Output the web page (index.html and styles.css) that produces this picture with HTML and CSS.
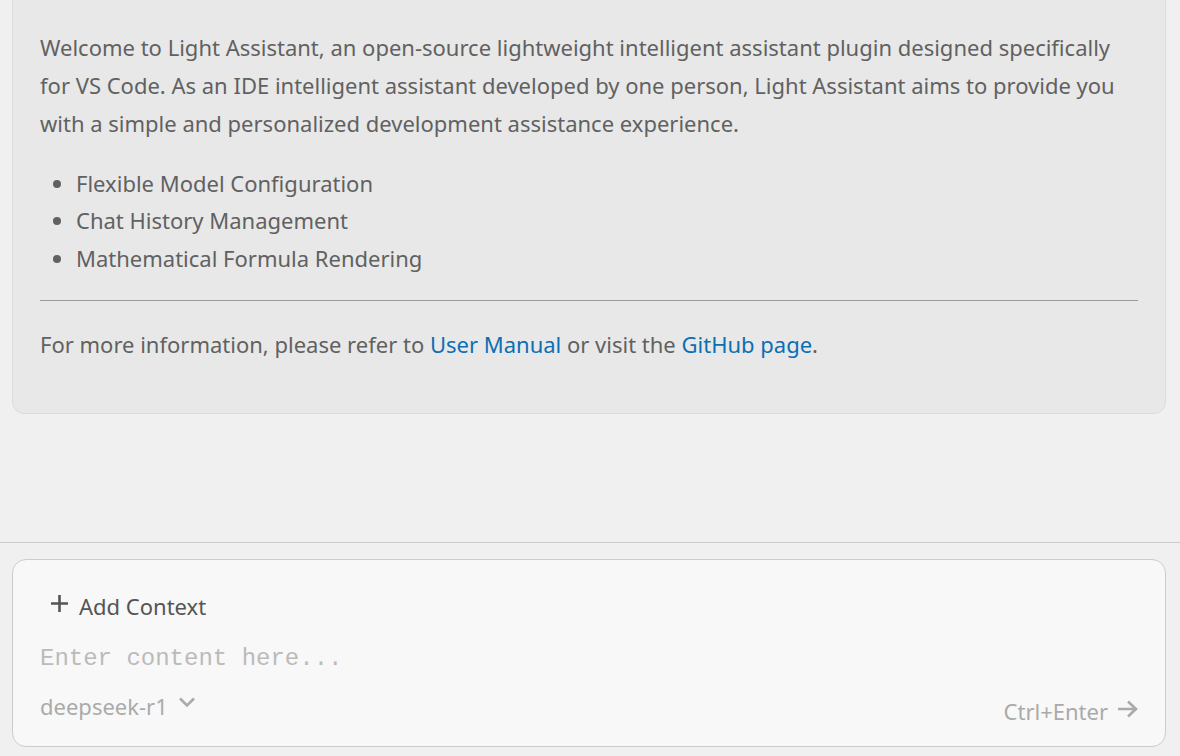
FILE: index.html
```html
<!DOCTYPE html>
<html lang="en">
<head>
<meta charset="utf-8">
<title>Light Assistant</title>
<link rel="stylesheet" href="styles.css">
</head>
<body>
<div class="app">
  <div class="messages">
    <div class="card">
      <p>Welcome to Light Assistant, an open-source lightweight intelligent assistant plugin designed specifically for VS Code. As an IDE intelligent assistant developed by one person, Light Assistant aims to provide you with a simple and personalized development assistance experience.</p>
      <ul>
        <li>Flexible Model Configuration</li>
        <li>Chat History Management</li>
        <li>Mathematical Formula Rendering</li>
      </ul>
      <hr>
      <p>For more information, please refer to <a href="#">User Manual</a> or visit the <a href="#">GitHub page</a>.</p>
    </div>
  </div>
  <div class="composer">
    <div class="inputbox">
      <div class="add-context">
        <svg class="plus" width="19" height="19" viewBox="0 0 19 19"><path d="M9.5 1v17M1 9.5h17" stroke="#555" stroke-width="2.6" fill="none"/></svg>
        <span>Add Context</span>
      </div>
      <div class="placeholder">Enter content here...</div>
      <div class="footer">
        <div class="model">deepseek-r1
          <svg width="18" height="12" viewBox="0 0 18 12"><path d="M2 2.5l7 7 7-7" stroke="#aaa" stroke-width="2.6" fill="none"/></svg>
        </div>
        <div class="send">Ctrl+Enter
          <svg width="21" height="18" viewBox="0 0 21 18"><path d="M1 9h18M11 1.5l8 7.5-8 7.5" stroke="#aaa" stroke-width="2.6" fill="none"/></svg>
        </div>
      </div>
    </div>
  </div>
</div>
</body>
</html>
```

FILE: styles.css
```css
* { box-sizing: border-box; }
html, body { margin: 0; height: 100%; }
body {
  background: #f0f0f0;
  font-family: "Noto Sans", "Open Sans", sans-serif;
  color: #616161;
  overflow: hidden;
}
.app { display: flex; flex-direction: column; height: 756px; }
.messages {
  height: 543px;
  flex-shrink: 0;
  overflow: hidden;
  display: flex;
  flex-direction: column;
  justify-content: flex-end;
  padding: 0 14px 128px 12px;
  border-bottom: 1px solid #cccccc;
}
.card {
  flex-shrink: 0;
  background: #e8e8e8;
  border: 1px solid #dcdcdc;
  border-radius: 12px;
  padding: 40px 27px 28px 27px;
  font-size: 22px;
  line-height: 38px;
}
.card p { margin: 0 0 23px; }
.card ul { margin: 0 0 23px; padding-left: 36px; line-height: 37.5px; }
.card hr { border: 0; border-top: 1px solid #999; margin: 0 0 24px; }
.card p:last-child { margin-bottom: 22px; }
.card a { color: #0a6fb5; text-decoration: none; }
.composer { padding: 16px 14px 9px 12px; flex: 1; display: flex; }
.inputbox {
  flex: 1;
  background: #f8f8f8;
  border: 1px solid #cccccc;
  border-radius: 14px;
  padding: 30px 27px 24px 27px;
  display: flex;
  flex-direction: column;
}
.add-context {
  display: flex;
  align-items: center;
  gap: 10px;
  padding-left: 10px;
  font-size: 22px;
  color: #555;
  height: 32px;
}
.plus { margin-top: -5px; }
.placeholder {
  font-family: "Liberation Mono", monospace;
  font-size: 24px;
  color: #bbbbbb;
  margin-top: 23px;
  height: 28px;
  line-height: 28px;
}
.footer {
  margin-top: auto;
  display: flex;
  justify-content: space-between;
  align-items: flex-end;
  font-size: 22px;
  color: #aaaaaa;
}
.model { display: flex; align-items: center; gap: 10px; margin-bottom: 1px; }
.model svg { margin-top: -8px; }
.send { display: flex; align-items: center; gap: 9px; margin-bottom: -4px; }
.send svg { margin-top: -4px; }
```
